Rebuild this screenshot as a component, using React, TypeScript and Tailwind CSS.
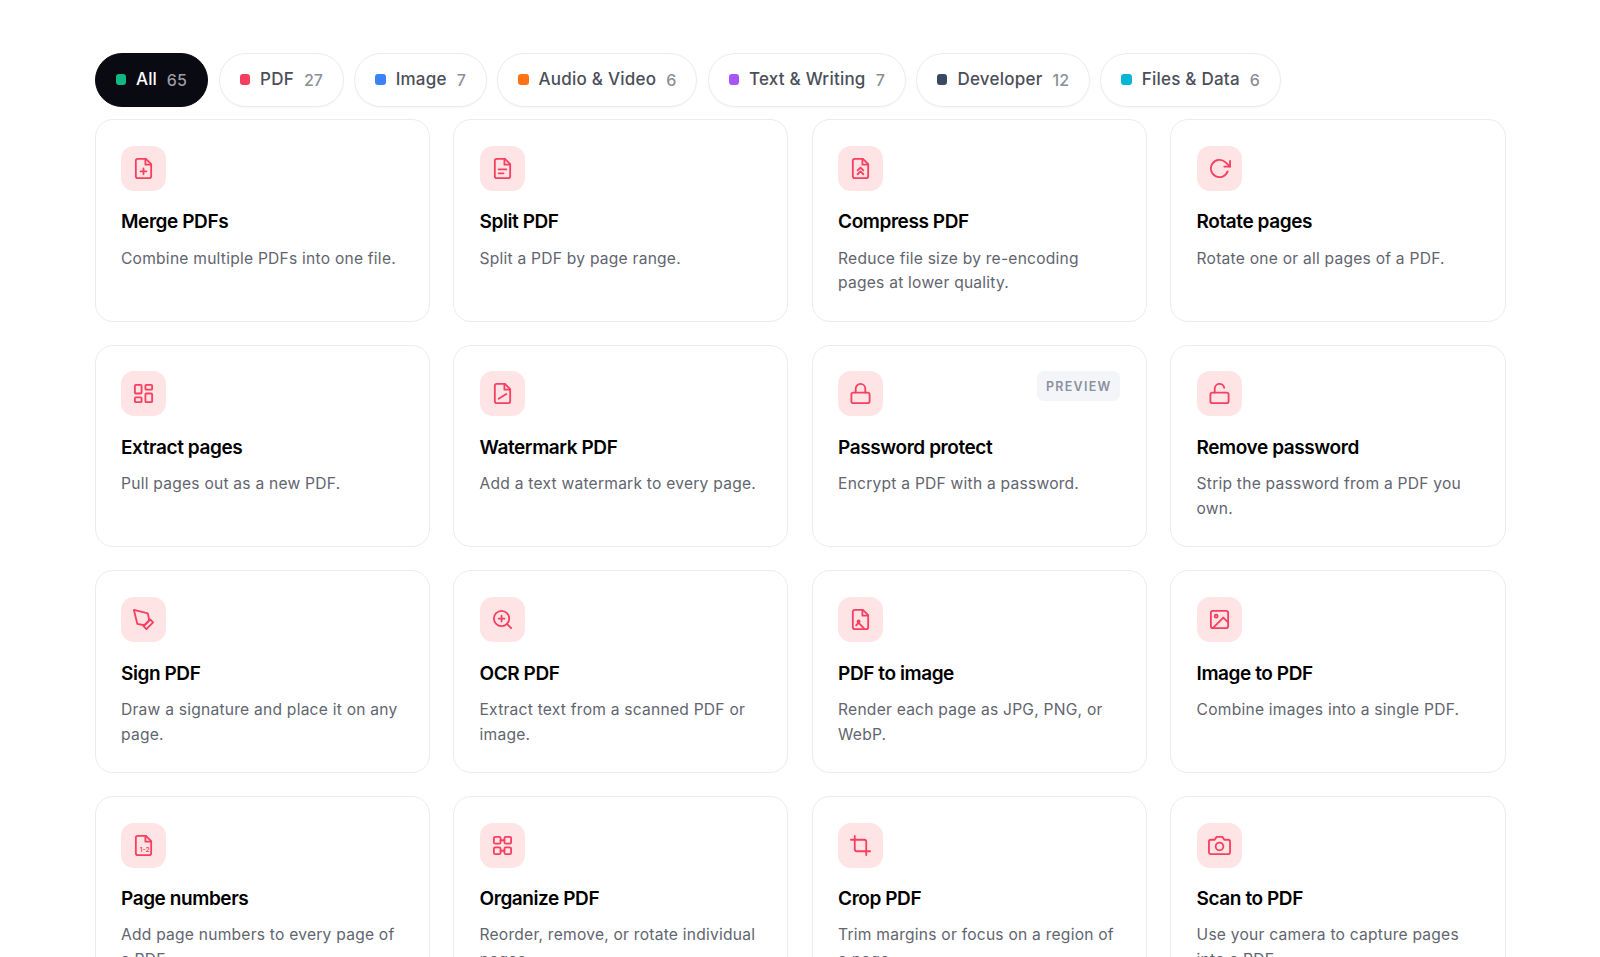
import type { ReactNode } from "react";

const categories = [
  { name: "All", count: 65, dot: "bg-[#10b981]", active: true },
  { name: "PDF", count: 27, dot: "bg-[#f43f5e]" },
  { name: "Image", count: 7, dot: "bg-[#3b82f6]" },
  { name: "Audio & Video", count: 6, dot: "bg-[#ff7214]" },
  { name: "Text & Writing", count: 7, dot: "bg-[#a855f7]" },
  { name: "Developer", count: 12, dot: "bg-[#3a4861]" },
  { name: "Files & Data", count: 6, dot: "bg-[#06b6d4]" },
];

// Page outline shared by all the document icons
const file = (
  <>
    <path d="M14.5 2H6a2 2 0 0 0-2 2v16a2 2 0 0 0 2 2h12a2 2 0 0 0 2-2V7.5L14.5 2z" />
    <path d="M14 2v6h6" />
  </>
);

type Tool = {
  title: string;
  text: string;
  icon: ReactNode;
  preview?: boolean;
};

const tools: Tool[] = [
  {
    title: "Merge PDFs",
    text: "Combine multiple PDFs into one file.",
    icon: <>{file}<path d="M12 12v6M9 15h6" /></>,
  },
  {
    title: "Split PDF",
    text: "Split a PDF by page range.",
    icon: <>{file}<path d="M8 13h8M8 17h5" /></>,
  },
  {
    title: "Compress PDF",
    text: "Reduce file size by re-encoding pages at lower quality.",
    icon: <>{file}<path d="m9 14 3-3 3 3M9 18l3-3 3 3" /></>,
  },
  {
    title: "Rotate pages",
    text: "Rotate one or all pages of a PDF.",
    icon: <><path d="M23 4v6h-6" /><path d="M20.49 15a9 9 0 1 1-2.12-9.36L23 10" /></>,
  },
  {
    title: "Extract pages",
    text: "Pull pages out as a new PDF.",
    icon: (
      <>
        <rect x="3" y="3" width="7" height="9" rx="1" />
        <rect x="14" y="3" width="7" height="5" rx="1" />
        <rect x="14" y="12" width="7" height="9" rx="1" />
        <rect x="3" y="16" width="7" height="5" rx="1" />
      </>
    ),
  },
  {
    title: "Watermark PDF",
    text: "Add a text watermark to every page.",
    icon: <>{file}<path d="m8 17.5 8-5" /></>,
  },
  {
    title: "Password protect",
    text: "Encrypt a PDF with a password.",
    icon: <><rect x="2.5" y="11" width="19" height="11" rx="2" /><path d="M7 11V7a5 5 0 0 1 10 0v4" /></>,
    preview: true,
  },
  {
    title: "Remove password",
    text: "Strip the password from a PDF you own.",
    icon: <><rect x="2.5" y="11" width="19" height="11" rx="2" /><path d="M7 11V7a5 5 0 0 1 9.9-1" /></>,
  },
  {
    title: "Sign PDF",
    text: "Draw a signature and place it on any page.",
    icon: <><path d="m12 19 7-7 3 3-7 7-3-3z" /><path d="m18 13-1.5-7.5L2 2l3.5 14.5L13 18l5-5z" /></>,
  },
  {
    title: "OCR PDF",
    text: "Extract text from a scanned PDF or image.",
    icon: <><circle cx="11" cy="11" r="8" /><path d="m21 21-4.35-4.35M11 8v6M8 11h6" /></>,
  },
  {
    title: "PDF to image",
    text: "Render each page as JPG, PNG, or WebP.",
    icon: <>{file}<circle cx="10" cy="14" r="1.1" /><path d="m7.5 18 2.5-2.5 5.5 5.5" /></>,
  },
  {
    title: "Image to PDF",
    text: "Combine images into a single PDF.",
    icon: (
      <>
        <rect x="3" y="3" width="18" height="18" rx="2" />
        <circle cx="8.5" cy="8.5" r="1.5" />
        <path d="m21 15-5-5L5 21" />
      </>
    ),
  },
  {
    title: "Page numbers",
    text: "Add page numbers to every page of a PDF.",
    icon: <>{file}<text x="8.2" y="18.8" fontSize="7" fontWeight="600" fill="currentColor" stroke="none">1-2</text></>,
  },
  {
    title: "Organize PDF",
    text: "Reorder, remove, or rotate individual pages.",
    icon: (
      <>
        <rect x="3" y="3" width="7" height="7" rx="1.5" />
        <rect x="14" y="3" width="7" height="7" rx="1.5" />
        <rect x="3" y="14" width="7" height="7" rx="1.5" />
        <rect x="14" y="14" width="7" height="7" rx="1.5" />
        <path d="M10 6.5h4M10 17.5h4" />
      </>
    ),
  },
  {
    title: "Crop PDF",
    text: "Trim margins or focus on a region of a page.",
    icon: <><path d="M6 2v14a2 2 0 0 0 2 2h14" /><path d="M18 22V8a2 2 0 0 0-2-2H2" /></>,
  },
  {
    title: "Scan to PDF",
    text: "Use your camera to capture pages into a PDF.",
    icon: (
      <>
        <path d="M23 19a2 2 0 0 1-2 2H3a2 2 0 0 1-2-2V8a2 2 0 0 1 2-2h4l2-3h6l2 3h4a2 2 0 0 1 2 2z" />
        <circle cx="12" cy="13" r="4" />
      </>
    ),
  },
];

function ToolCard({ title, text, icon, preview }: Tool) {
  return (
    <a className="block h-[202.5px] rounded-[18px] border border-[#ebecee] bg-white px-[25.5px] pt-[25.5px]">
      <div className="flex items-start justify-between">
        <div className="flex size-[45px] items-center justify-center rounded-[13px] bg-[#ffe4e6] text-[#f83f60]">
          <svg
            viewBox="0 0 24 24"
            className="size-[23px]"
            fill="none"
            stroke="currentColor"
            strokeWidth="1.9"
            strokeLinecap="round"
            strokeLinejoin="round"
          >
            {icon}
          </svg>
        </div>
        {preview && (
          <span className="flex h-[30px] items-center rounded-[7px] bg-[#f3f5f8] px-[9px] pt-px text-[12.5px] font-semibold tracking-[1.25px] text-[#8b90a0]">
            PREVIEW
          </span>
        )}
      </div>
      <h3 className="mt-[17.6px] text-[19px] leading-[28px] font-semibold tracking-[-0.42px] text-black">
        {title}
      </h3>
      <p className="mt-[10.2px] text-[15.6px] leading-[24.9px] tracking-[0.23px] text-[#62656f]">{text}</p>
    </a>
  );
}

export default function App() {
  return (
    <div className="h-[957px] overflow-hidden bg-white pt-[52.5px] pr-[94.5px] pl-[94.5px] font-['Inter',sans-serif]">
      <div className="flex gap-[10.4px]">
        {categories.map((c) => (
          <button
            key={c.name}
            className={
              c.active
                ? "flex h-[54px] items-center rounded-full border border-[#0a0a12] bg-[#0a0a12] px-[20.3px] text-[17px] font-medium text-white"
                : "flex h-[54px] items-center rounded-full border border-[#ebecee] bg-white px-[20px] text-[17px] font-[450] tracking-[0.23px] text-[#4b4e58] shadow-[0_1px_2px_rgba(0,0,0,0.04)]"
            }
          >
            <span className={`size-[10.3px] rounded-[3px] ${c.dot}`} />
            <span className="ml-[10px]">{c.name}</span>
            <span
              className={
                c.active
                  ? "ml-[10px] text-[16px] tracking-[0.2px] text-[#9a9ba3]"
                  : "ml-[10px] text-[16px] tracking-normal text-[#8b8e98]"
              }
            >
              {c.count}
            </span>
          </button>
        ))}
      </div>
      <div className="mt-[12.8px] grid grid-cols-4 gap-[23.1px]">
        {tools.map((tool) => (
          <ToolCard key={tool.title} {...tool} />
        ))}
      </div>
    </div>
  );
}
